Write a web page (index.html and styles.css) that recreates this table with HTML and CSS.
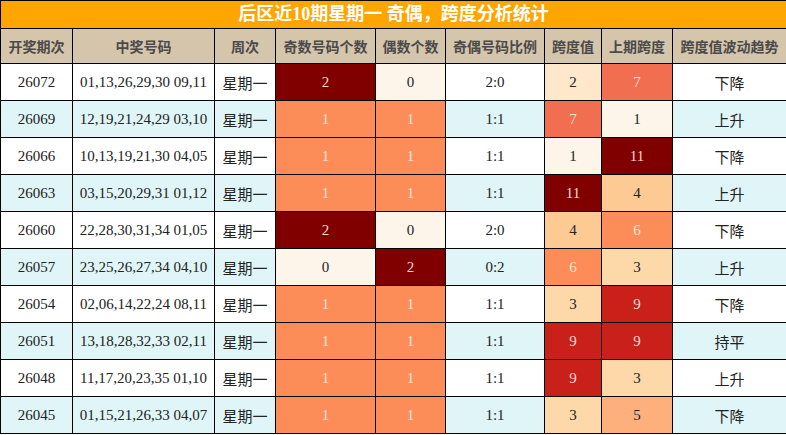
FILE: index.html
```html
<!DOCTYPE html>
<html lang="zh">
<head>
<meta charset="utf-8">
<link rel="stylesheet" href="styles.css">
</head>
<body>
<table class="stats">
  <colgroup>
    <col class="w72"><col class="w142"><col class="w61"><col class="w100"><col class="w70"><col class="w99"><col class="w57"><col class="w71"><col class="w114">
  </colgroup>
  <thead>
    <tr class="title-row"><th colspan="9">后区近10期星期一 奇偶，跨度分析统计</th></tr>
    <tr class="head-row">
      <th>开奖期次</th><th>中奖号码</th><th>周次</th><th>奇数号码个数</th><th>偶数个数</th><th>奇偶号码比例</th><th>跨度值</th><th>上期跨度</th><th>跨度值波动趋势</th>
    </tr>
  </thead>
  <tbody>
    <tr><td class="num">26072</td><td class="num">01,13,26,29,30 09,11</td><td class="cjk">星期一</td><td class="num dk">2</td><td class="num p0">0</td><td class="num">2:0</td><td class="num p2">2</td><td class="num rd">7</td><td class="cjk">下降</td></tr>
    <tr><td class="num">26069</td><td class="num">12,19,21,24,29 03,10</td><td class="cjk">星期一</td><td class="num or">1</td><td class="num or">1</td><td class="num">1:1</td><td class="num rd">7</td><td class="num p0">1</td><td class="cjk">上升</td></tr>
    <tr><td class="num">26066</td><td class="num">10,13,19,21,30 04,05</td><td class="cjk">星期一</td><td class="num or">1</td><td class="num or">1</td><td class="num">1:1</td><td class="num p0">1</td><td class="num dk">11</td><td class="cjk">下降</td></tr>
    <tr><td class="num">26063</td><td class="num">03,15,20,29,31 01,12</td><td class="cjk">星期一</td><td class="num or">1</td><td class="num or">1</td><td class="num">1:1</td><td class="num dk">11</td><td class="num p4">4</td><td class="cjk">上升</td></tr>
    <tr><td class="num">26060</td><td class="num">22,28,30,31,34 01,05</td><td class="cjk">星期一</td><td class="num dk">2</td><td class="num p0">0</td><td class="num">2:0</td><td class="num p4">4</td><td class="num or">6</td><td class="cjk">下降</td></tr>
    <tr><td class="num">26057</td><td class="num">23,25,26,27,34 04,10</td><td class="cjk">星期一</td><td class="num p0">0</td><td class="num dk">2</td><td class="num">0:2</td><td class="num or">6</td><td class="num p3">3</td><td class="cjk">上升</td></tr>
    <tr><td class="num">26054</td><td class="num">02,06,14,22,24 08,11</td><td class="cjk">星期一</td><td class="num or">1</td><td class="num or">1</td><td class="num">1:1</td><td class="num p3">3</td><td class="num r9">9</td><td class="cjk">下降</td></tr>
    <tr><td class="num">26051</td><td class="num">13,18,28,32,33 02,11</td><td class="cjk">星期一</td><td class="num or">1</td><td class="num or">1</td><td class="num">1:1</td><td class="num r9">9</td><td class="num r9">9</td><td class="cjk">持平</td></tr>
    <tr><td class="num">26048</td><td class="num">11,17,20,23,35 01,10</td><td class="cjk">星期一</td><td class="num or">1</td><td class="num or">1</td><td class="num">1:1</td><td class="num r9">9</td><td class="num p3">3</td><td class="cjk">上升</td></tr>
    <tr><td class="num">26045</td><td class="num">01,15,21,26,33 04,07</td><td class="cjk">星期一</td><td class="num or">1</td><td class="num or">1</td><td class="num">1:1</td><td class="num p3">3</td><td class="num p5">5</td><td class="cjk">下降</td></tr>
  </tbody>
</table>
</body>
</html>
```

FILE: styles.css
```css
html, body {
  margin: 0;
  padding: 0;
  background: #ffffff;
}

.stats {
  width: 786px;
  table-layout: fixed;
  border-collapse: collapse;
  font-family: "Noto Sans CJK SC", "Noto Sans", sans-serif;
}

.w72 { width: 72px; }
.w142 { width: 142px; }
.w61 { width: 61px; }
.w100 { width: 100px; }
.w70 { width: 70px; }
.w99 { width: 99px; }
.w57 { width: 57px; }
.w71 { width: 71px; }
.w114 { width: 114px; }

.stats th,
.stats td {
  border: 1px solid #000;
  padding: 0;
  text-align: center;
  white-space: nowrap;
  overflow: hidden;
}

.title-row th {
  height: 27px;
  background: #FFA500;
  color: #ffffff;
  font-size: 18px;
  font-weight: bold;
  font-family: "Liberation Serif", "Noto Sans CJK SC", serif;
  line-height: 27px;
}

.head-row th {
  height: 34px;
  background: #D5C5AA;
  color: #4a4a4a;
  font-size: 14px;
  font-weight: bold;
}

.stats td {
  height: 36px;
  color: #222;
}

.stats tbody tr:nth-child(even) td {
  background: #DFF5F7;
}

.num {
  font-family: "Liberation Serif", serif;
  font-size: 15px;
}

.cjk {
  font-family: "Noto Sans CJK SC", sans-serif;
  font-size: 15px;
  color: #111;
}

.stats tbody tr td.dk { background: #800000; color: #f3d9d9; }
.stats tbody tr td.or { background: #FC8D59; color: #fde6d8; }
.stats tbody tr td.rd { background: #F26E50; color: #fde3da; }
.stats tbody tr td.r9 { background: #C9201A; color: #f9dcda; }
.stats tbody tr td.p0 { background: #FEF5EA; }
.stats tbody tr td.p2 { background: #FEE7CA; }
.stats tbody tr td.p4 { background: #FDCA93; }
.stats tbody tr td.p3 { background: #FDD9AA; }
.stats tbody tr td.p5 { background: #FDB07B; }
```
